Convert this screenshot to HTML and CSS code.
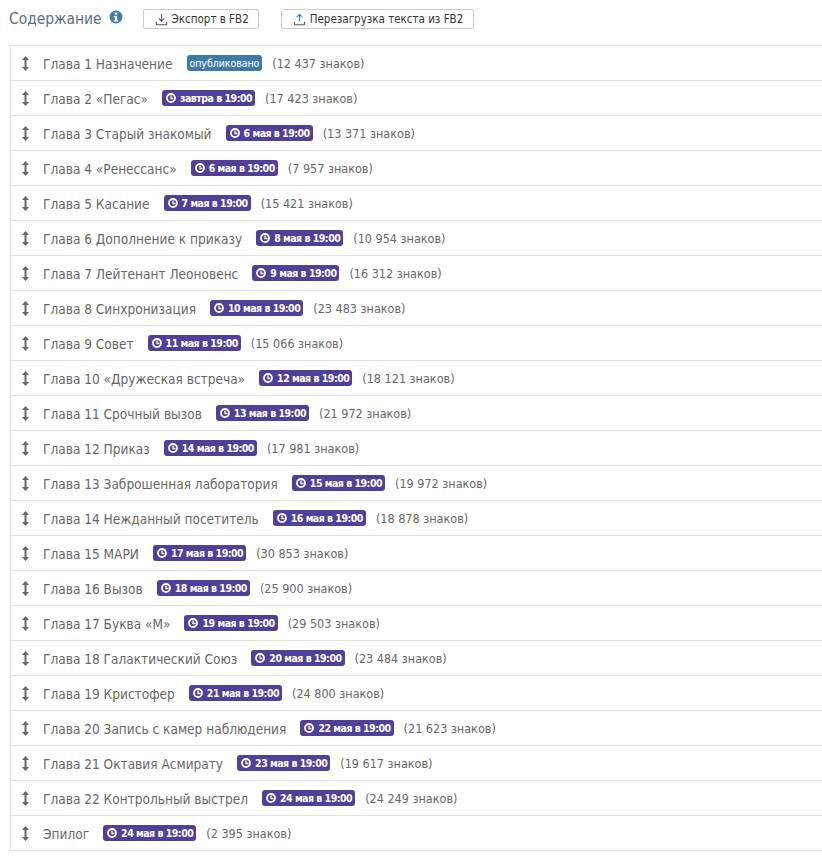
FILE: index.html
```html
<!DOCTYPE html>
<html lang="ru">
<head>
<meta charset="utf-8">
<title>Содержание</title>
<link rel="stylesheet" href="styles.css">
</head>
<body>
<svg class="defs" width="0" height="0" aria-hidden="true">
<symbol id="move" viewBox="0 0 7 15"><path d="M3.500 2v11" fill="none" stroke="#666" stroke-width="2"/><path d="M3.500 0L7 4H0zM3.500 15L7 11H0z" fill="#666"/></symbol>
<symbol id="clock" viewBox="0 0 10 10"><circle cx="5" cy="5" r="4" fill="none" stroke="#fff" stroke-width="1.800"/><path d="M5 2.500V5.500H7.500" fill="none" stroke="#fff" stroke-width="1.300"/></symbol>
</svg>
<header class="head">
<h1 class="title">Содержание</h1>
<svg class="info" viewBox="0 0 14 14" width="14" height="14"><circle cx="7" cy="7" r="6.500" fill="#3d7eaa"/><rect x="5.800" y="2.500" width="2.400" height="2.200" fill="#fff"/><path d="M4.800 6h3.400v4.200h1v1.300H4.800v-1.300h1V7.300h-1z" fill="#fff"/></svg>
<button class="btn btn-export"><svg class="btn-ico" viewBox="0 0 14 14" width="13" height="13"><path d="M7 1v7.500M4 5.800L7 8.800l3-3" fill="none" stroke="#8a3f78" stroke-width="1.200"/><path d="M1.500 9.500v2.300a.8.8 0 0 0 .8.8h9.400a.8.8 0 0 0 .8-.8V9.500" fill="none" stroke="#555" stroke-width="1.200"/></svg>Экспорт в FB2</button>
<button class="btn btn-reload"><svg class="btn-ico" viewBox="0 0 14 14" width="13" height="13"><path d="M7 9V1.500M4 4.500L7 1.500l3 3" fill="none" stroke="#3d7eaa" stroke-width="1.200"/><path d="M1.500 9.500v2.300a.8.8 0 0 0 .8.8h9.400a.8.8 0 0 0 .8-.8V9.500" fill="none" stroke="#555" stroke-width="1.200"/></svg>Перезагрузка текста из FB2</button>
</header>
<ul class="list">
<li class="row"><svg class="move"><use href="#move"/></svg><span class="name">Глава 1 Назначение</span><span class="badge pub">опубликовано</span><span class="count">(12 437 знаков)</span></li>
<li class="row"><svg class="move"><use href="#move"/></svg><span class="name">Глава 2 «Пегас»</span><span class="badge"><svg class="clock"><use href="#clock"/></svg>завтра в 19:00</span><span class="count">(17 423 знаков)</span></li>
<li class="row"><svg class="move"><use href="#move"/></svg><span class="name">Глава 3 Старый знакомый</span><span class="badge"><svg class="clock"><use href="#clock"/></svg>6 мая в 19:00</span><span class="count">(13 371 знаков)</span></li>
<li class="row"><svg class="move"><use href="#move"/></svg><span class="name">Глава 4 «Ренессанс»</span><span class="badge"><svg class="clock"><use href="#clock"/></svg>6 мая в 19:00</span><span class="count">(7 957 знаков)</span></li>
<li class="row"><svg class="move"><use href="#move"/></svg><span class="name">Глава 5 Касание</span><span class="badge"><svg class="clock"><use href="#clock"/></svg>7 мая в 19:00</span><span class="count">(15 421 знаков)</span></li>
<li class="row"><svg class="move"><use href="#move"/></svg><span class="name">Глава 6 Дополнение к приказу</span><span class="badge"><svg class="clock"><use href="#clock"/></svg>8 мая в 19:00</span><span class="count">(10 954 знаков)</span></li>
<li class="row"><svg class="move"><use href="#move"/></svg><span class="name">Глава 7 Лейтенант Леоновенс</span><span class="badge"><svg class="clock"><use href="#clock"/></svg>9 мая в 19:00</span><span class="count">(16 312 знаков)</span></li>
<li class="row"><svg class="move"><use href="#move"/></svg><span class="name">Глава 8 Синхронизация</span><span class="badge"><svg class="clock"><use href="#clock"/></svg>10 мая в 19:00</span><span class="count">(23 483 знаков)</span></li>
<li class="row"><svg class="move"><use href="#move"/></svg><span class="name">Глава 9 Совет</span><span class="badge"><svg class="clock"><use href="#clock"/></svg>11 мая в 19:00</span><span class="count">(15 066 знаков)</span></li>
<li class="row"><svg class="move"><use href="#move"/></svg><span class="name">Глава 10 «Дружеская встреча»</span><span class="badge"><svg class="clock"><use href="#clock"/></svg>12 мая в 19:00</span><span class="count">(18 121 знаков)</span></li>
<li class="row"><svg class="move"><use href="#move"/></svg><span class="name">Глава 11 Срочный вызов</span><span class="badge"><svg class="clock"><use href="#clock"/></svg>13 мая в 19:00</span><span class="count">(21 972 знаков)</span></li>
<li class="row"><svg class="move"><use href="#move"/></svg><span class="name">Глава 12 Приказ</span><span class="badge"><svg class="clock"><use href="#clock"/></svg>14 мая в 19:00</span><span class="count">(17 981 знаков)</span></li>
<li class="row"><svg class="move"><use href="#move"/></svg><span class="name">Глава 13 Заброшенная лаборатория</span><span class="badge"><svg class="clock"><use href="#clock"/></svg>15 мая в 19:00</span><span class="count">(19 972 знаков)</span></li>
<li class="row"><svg class="move"><use href="#move"/></svg><span class="name">Глава 14 Нежданный посетитель</span><span class="badge"><svg class="clock"><use href="#clock"/></svg>16 мая в 19:00</span><span class="count">(18 878 знаков)</span></li>
<li class="row"><svg class="move"><use href="#move"/></svg><span class="name">Глава 15 МАРИ</span><span class="badge"><svg class="clock"><use href="#clock"/></svg>17 мая в 19:00</span><span class="count">(30 853 знаков)</span></li>
<li class="row"><svg class="move"><use href="#move"/></svg><span class="name">Глава 16 Вызов</span><span class="badge"><svg class="clock"><use href="#clock"/></svg>18 мая в 19:00</span><span class="count">(25 900 знаков)</span></li>
<li class="row"><svg class="move"><use href="#move"/></svg><span class="name">Глава 17 Буква «М»</span><span class="badge"><svg class="clock"><use href="#clock"/></svg>19 мая в 19:00</span><span class="count">(29 503 знаков)</span></li>
<li class="row"><svg class="move"><use href="#move"/></svg><span class="name">Глава 18 Галактический Союз</span><span class="badge"><svg class="clock"><use href="#clock"/></svg>20 мая в 19:00</span><span class="count">(23 484 знаков)</span></li>
<li class="row"><svg class="move"><use href="#move"/></svg><span class="name">Глава 19 Кристофер</span><span class="badge"><svg class="clock"><use href="#clock"/></svg>21 мая в 19:00</span><span class="count">(24 800 знаков)</span></li>
<li class="row"><svg class="move"><use href="#move"/></svg><span class="name">Глава 20 Запись с камер наблюдения</span><span class="badge"><svg class="clock"><use href="#clock"/></svg>22 мая в 19:00</span><span class="count">(21 623 знаков)</span></li>
<li class="row"><svg class="move"><use href="#move"/></svg><span class="name">Глава 21 Октавия Асмирату</span><span class="badge"><svg class="clock"><use href="#clock"/></svg>23 мая в 19:00</span><span class="count">(19 617 знаков)</span></li>
<li class="row"><svg class="move"><use href="#move"/></svg><span class="name">Глава 22 Контрольный выстрел</span><span class="badge"><svg class="clock"><use href="#clock"/></svg>24 мая в 19:00</span><span class="count">(24 249 знаков)</span></li>
<li class="row"><svg class="move"><use href="#move"/></svg><span class="name">Эпилог</span><span class="badge"><svg class="clock"><use href="#clock"/></svg>24 мая в 19:00</span><span class="count">(2 395 знаков)</span></li>
</ul>
</body>
</html>
```
FILE: styles.css
```css
html, body { margin: 0; padding: 0; background: #fff; }
body { font-family: "DejaVu Sans Condensed", "DejaVu Sans", sans-serif; color: #666; width: 822px; height: 860px; overflow: hidden; }
.defs { position: absolute; }
.head { display: flex; align-items: center; height: 45px; padding: 0 0 7px 9px; box-sizing: border-box; }
.title { margin: 0; font-size: 15.400px; font-weight: 400; color: #5d7183; }
.info { margin-left: 7px; margin-top: -4px; }
.btn { display: inline-flex; align-items: center; height: 20px; box-sizing: border-box; padding: 0 9px 0 11px; background: #fff; border: 1px solid #ccc; border-radius: 2px; font: 11.500px "DejaVu Sans Condensed", "DejaVu Sans", sans-serif; color: #333; }
.btn-export { margin-left: 20px; }
.btn-reload { margin-left: 22px; padding-right: 10px; }
.btn-ico { margin-right: 4px; }
.list { list-style: none; margin: 0 0 0 10px; padding: 0; border: 1px solid #e2e2e2; border-right: 0; }
.row { display: flex; align-items: center; height: 35px; box-sizing: border-box; border-bottom: 1px solid #e2e2e2; padding-left: 11px; font-size: 13.550px; }
.row:last-child { border-bottom: 0; height: 34px; }
.move { width: 7px; height: 15px; margin-right: 14px; }
.name { margin-top: 2px; margin-right: 14px; }
.badge { display: inline-flex; align-items: center; height: 16px; padding: 0 3px 0 4px; background: #50409a; color: #fff; font-size: 10.500px; font-weight: 700; letter-spacing: -0.5px; border-radius: 3px; }
.badge.pub { background: #3f7aa6; padding: 0 3px; font-weight: 400; letter-spacing: -0.05px; }
.clock { width: 10px; height: 10px; margin-right: 4px; }
.count { margin-left: 10px; font-size: 12.500px; }
```
